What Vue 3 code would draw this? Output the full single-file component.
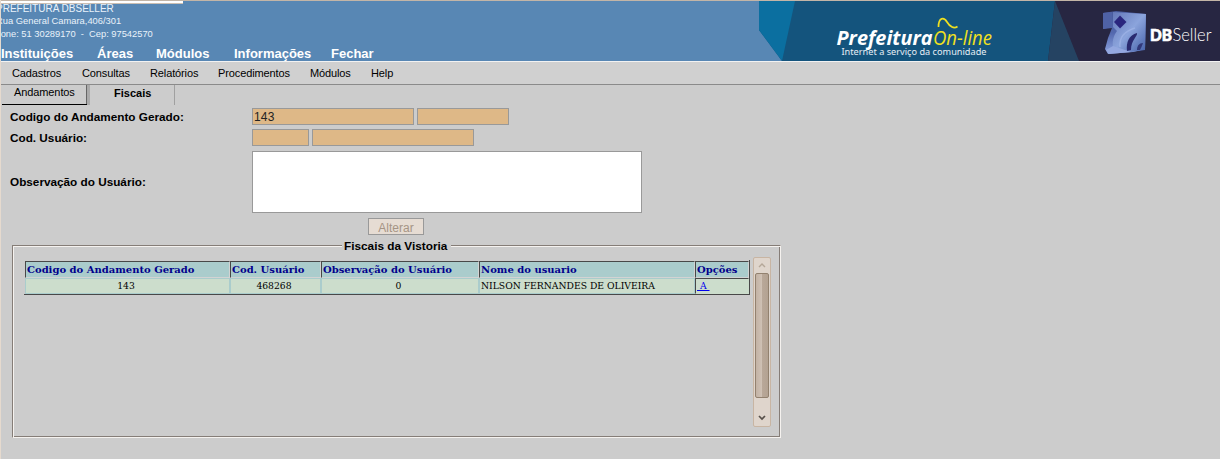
<script setup>
const areas = [
  { label: 'Instituições', w: 96 },
  { label: 'Áreas', w: 59 },
  { label: 'Módulos', w: 78 },
  { label: 'Informações', w: 97 },
  { label: 'Fechar', w: 60 },
]
const menu = [
  { label: 'Cadastros', w: 70 },
  { label: 'Consultas', w: 68 },
  { label: 'Relatórios', w: 68 },
  { label: 'Procedimentos', w: 92 },
  { label: 'Módulos', w: 61 },
  { label: 'Help', w: 40 },
]
const columns = ['Codigo do Andamento Gerado', 'Cod. Usuário', 'Observação do Usuário', 'Nome do usuario', 'Opções']
</script>

<template>
  <div class="page">
    <header class="top">
      <div class="left">
        <div class="progress"></div>
        <div class="address">
          <div>PREFEITURA DBSELLER</div>
          <div class="small">Rua General Camara,406/301</div>
          <div class="small phone">Fone: 51 30289170 &nbsp;- &nbsp;Cep: 97542570</div>
        </div>
        <nav class="areas">
          <span v-for="a in areas" :key="a.label" :style="{ width: a.w + 'px' }">{{ a.label }}</span>
        </nav>
      </div>
      <svg class="brand" width="461" height="60" viewBox="759 1 461 60">
        <defs>
          <linearGradient id="cube" x1="0" y1="0" x2="1" y2="1">
            <stop offset="0" stop-color="#6478b8" />
            <stop offset=".5" stop-color="#8ba4dc" />
            <stop offset="1" stop-color="#4560a8" />
          </linearGradient>
          <linearGradient id="side" x1="0" y1="0" x2="0" y2="1">
            <stop offset="0" stop-color="#485a9c" />
            <stop offset=".5" stop-color="#5368ae" />
            <stop offset="1" stop-color="#8ca3df" />
          </linearGradient>
          <filter id="soft"><feGaussianBlur stdDeviation=".6" /></filter>
        </defs>
        <path d="M759 1H1060V61H782L759 30Z" fill="#14547d" />
        <path d="M759 1H795L782 61L759 30Z" fill="#0b6fa0" />
        <path d="M1055 1H1220V61H1048Z" fill="#272642" />
        <path d="M1055 1L1079 61H1048Z" fill="#254362" />
        <text x="836.5" y="44.5" class="pref" textLength="96" lengthAdjust="spacingAndGlyphs">Prefeitura</text>
        <text x="933" y="44.5" class="online" textLength="59" lengthAdjust="spacingAndGlyphs">On-line</text>
        <path d="M938.5 27C938.5 17 944 17 947 22C950 27 954 29 957.5 26.5" fill="none" stroke="#f0e020" stroke-width="1.7" />
        <text x="841.5" y="55" class="tag" textLength="145" lengthAdjust="spacingAndGlyphs">Internet a serviço da comunidade</text>
        <g filter="url(#soft)">
          <path d="M1103 13L1116 11L1146 14L1145 49L1133 52L1108 54L1105 49L1108 38L1112 28L1103 29Z" fill="url(#side)" />
          <path d="M1113 12L1146 14L1145 50L1131 52L1113 47C1112 40 1114 35 1117 31L1113 27Z" fill="url(#cube)" />
          <path d="M1103 13L1112 12V27L1103 29Z" fill="#5062a6" />
          <path d="M1106 50L1113 46L1131 52L1109 54Z" fill="#94a8e0" />
          <path d="M1120 15.5L1126.5 22L1120 28.5L1114 22Z" fill="#2c287e" />
          <path d="M1127 51C1126 42 1129 35 1137 33C1138 36 1131 40 1131 50Z" fill="#292c70" />
          <path d="M1137 50C1137 46 1139 43 1143 43C1142 46 1141 48 1140 50Z" fill="#303779" />
          <path d="M1120 47C1119 37 1125 31 1135 28" fill="none" stroke="#b0c1ef" stroke-width="1.5" opacity=".45" />
        </g>
        <text x="1150" y="40.5" class="db" textLength="22" lengthAdjust="spacingAndGlyphs">DB</text>
        <text x="1172.5" y="40.5" class="seller" textLength="39" lengthAdjust="spacingAndGlyphs">Seller</text>
      </svg>
    </header>

    <nav class="menu">
      <span v-for="m in menu" :key="m.label" :style="{ width: m.w + 'px' }">{{ m.label }}</span>
    </nav>

    <div class="tabs">
      <div class="tab">Andamentos</div>
      <div class="tab active">Fiscais</div>
    </div>

    <form class="form" @submit.prevent>
      <div class="row">
        <label>Codigo do Andamento Gerado:</label>
        <div class="box w162">143</div>
        <div class="box w92"></div>
      </div>
      <div class="row second">
        <label>Cod. Usuário:</label>
        <div class="box w57"></div>
        <div class="box w162"></div>
      </div>
      <div class="row obs">
        <label>Observação do Usuário:</label>
        <div class="area"></div>
      </div>
      <div class="btn">Alterar</div>
    </form>

    <section class="group">
      <div class="legend">Fiscais da Vistoria</div>
      <div class="frame">
        <div class="table">
          <div v-for="c in columns" :key="c" class="th">{{ c }}</div>
          <div class="td center">143</div>
          <div class="td center">468268</div>
          <div class="td center">0</div>
          <div class="td name">NILSON FERNANDES DE OLIVEIRA</div>
          <div class="td opt"><a>&nbsp;A&nbsp;</a></div>
        </div>
        <div class="scroll">
          <svg class="up" width="16" height="15" viewBox="0 0 16 15"><path d="M5 9L8 6L11 9" fill="none" stroke="#b5a798" stroke-width="1.4" /></svg>
          <div class="thumb"></div>
          <svg class="down" width="16" height="15" viewBox="0 0 16 15"><path d="M5 6L8 9L11 6" fill="none" stroke="#57504a" stroke-width="1.7" /></svg>
        </div>
      </div>
    </section>
  </div>
</template>

<style>
body { background: #ccc; overflow: hidden; }
</style>

<style scoped>
.page { box-sizing: border-box; width: 1220px; height: 459px; background: #ccc; overflow: hidden; font-family: "Liberation Sans", Arial, sans-serif; font-size: 11px; color: #000; white-space: nowrap; border-left: 1px solid #e6dace; }
.page * { box-sizing: border-box; }
.top { display: flex; justify-content: space-between; height: 62px; margin-left: -1px; background: #5887b4; border-top: 1px solid #c3b5a7; border-bottom: 1px solid #f2f2f2; }
.left { width: 600px; overflow: hidden; }
.progress { width: 183px; height: 3px; background: #fff; border-bottom: 1px solid #cbbfb3; }
.address { margin: -2px 0 0 -4px; font-size: 10px; line-height: 13px; color: #e9f2fa; }
.small { font-size: 9.35px; height: 13px; }
.phone { margin-left: -1px; letter-spacing: -.02px; }
.areas { display: flex; padding-left: 1px; height: 20px; line-height: 20px; margin-top: 3px; font-size: 13px; font-weight: bold; color: #fff; }
.areas span { flex: none; }
.brand { display: block; flex: none; }
.pref { font: italic bold 20px "Open Sans", sans-serif; fill: #fff; }
.online { font: italic 20px "Open Sans", sans-serif; fill: #f0e020; }
.tag { font: 9px "Noto Sans", sans-serif; fill: #e6eef5; }
.db { font: 900 17px Lato, sans-serif; fill: #fff; stroke: #fff; stroke-width: .7px; }
.seller { font: 300 17px Lato, sans-serif; fill: #fff; }
.menu { display: flex; height: 23px; line-height: 22px; padding-left: 11px; background: #d0d0d0; border-bottom: 1px solid #8a8a8a; letter-spacing: -.12px; }
.menu span { flex: none; }
.tabs { display: flex; height: 20px; padding-left: 1px; }
.tab { width: 88px; height: 20px; line-height: 14px; padding-left: 12px; letter-spacing: -.1px; background: linear-gradient(#000, #000) 0 19px / 85px 1px no-repeat, linear-gradient(90deg, transparent 84px, #666 84px, #666 85px, #aaa 85px); }
.active { width: 85px; line-height: 17px; padding-left: 24px; letter-spacing: 0; font-weight: bold; background: none; border-right: 1px solid #a0a0a0; }
.form { padding: 3px 0 0 9px; }
.row { display: flex; height: 17px; line-height: 18px; }
.row label { width: 242px; font-weight: bold; font-size: 11.75px; }
.second { margin-top: 4px; }
.obs { margin-top: 5px; height: 62px; line-height: 62px; }
.box { height: 17px; border: 1px solid #999; background: #deb887; font-size: 12px; letter-spacing: .2px; line-height: 16px; padding-left: 1px; margin-right: 3px; color: #222; }
.w162 { width: 162px; }
.w92 { width: 92px; margin-left: 0; }
.w57 { width: 57px; }
.area { width: 390px; height: 62px; background: #fff; border: 1px solid #999; }
.btn { width: 56px; height: 17px; margin: 5px 0 0 358px; border: 1px solid #999; background: #e6dcd3; color: #a59485; font-size: 12px; line-height: 18px; text-align: center; }
.group { width: 769px; margin: 3px 0 0 11px; }
.legend { position: relative; z-index: 1; width: 109px; height: 16px; line-height: 16px; margin-left: 330px; padding-left: 2px; background: #ccc; font-weight: bold; font-size: 11.8px; }
.frame { display: flex; height: 193px; margin-top: -9px; padding: 11px 0 0 11px; border: 1px solid #857d77; border-right-color: #f5f2ef; border-bottom-color: #f5f2ef; box-shadow: inset 1px 1px #f5f2ef, inset -1px -1px #857d77; }
.table { display: grid; grid-template-columns: 205px 91px 158px 216px 54px; grid-template-rows: 17px 16px; width: 726px; height: 35px; margin-top: 3px; padding: 1px 0 0 1px; background: linear-gradient(#484848, #484848) 0 100% / 100% 1px no-repeat, linear-gradient(#484848, #484848) 100% 0 / 1px 100% no-repeat; font-family: "DejaVu Serif", serif; font-size: 9.22px; }
.th { border: 1px solid #484848; border-right-color: #d3d3d3; border-bottom-color: #d3d3d3; background: #aacccc; color: #00008b; font-weight: bold; font-size: 10px; line-height: 16px; padding-left: 1px; }
.td { border: 1px solid #aacccc; background: #ccddcc; line-height: 14px; }
.center { text-align: center; padding-right: 3px; }
.name { padding-left: 1px; }
.opt { border-color: #484848 #ccddcc #ccddcc #484848; padding-left: 1px; }
.opt a { color: #0000ee; text-decoration: underline; }
.scroll { width: 18px; height: 170px; margin: 0 0 0 3px; border: 1px solid #c8b5a3; border-radius: 2px; background: #dfd5cc; }
.scroll svg { display: block; }
.thumb { width: 14px; height: 125px; margin-left: 1px; border: 1px solid #92816f; border-radius: 2px; background: linear-gradient(90deg, #c3b3a5, #cfc1b5 50%, #b9a899 50%, #b3a292); }
.down { margin-top: 12px; }
</style>
